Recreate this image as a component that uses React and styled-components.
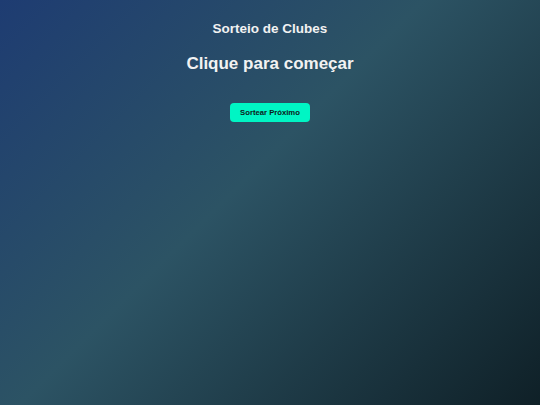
import React from 'react'
import styled, { createGlobalStyle } from 'styled-components'

const Global = createGlobalStyle`
  html, body, #root {
    margin: 0;
    height: 100%;
  }
  body {
    font-family: 'Liberation Sans', Arial, sans-serif;
    background: linear-gradient(135deg, #1e3c72 0%, #2c5364 45%, #0f2027 100%);
    color: #f2f2f2;
  }
`

const Page = styled.main`
  display: flex;
  flex-direction: column;
  align-items: center;
  padding-top: 21px;
  text-align: center;
`

const Title = styled.h1`
  margin: 0;
  font-size: 13.5px;
  font-weight: bold;
`

const Status = styled.h2`
  margin: 18px 0 0;
  font-size: 17px;
  font-weight: bold;
`

const DrawButton = styled.button`
  margin-top: 29px;
  padding: 0;
  height: 19px;
  width: 80px;
  border: none;
  border-radius: 4px;
  background: #00f5c4;
  color: #0d1a1a;
  font-family: 'Liberation Sans', Arial, sans-serif;
  font-size: 7.7px;
  font-weight: bold;
  white-space: nowrap;
  cursor: pointer;
`

const App = () => (
  <>
    <Global />
    <Page>
      <Title>Sorteio de Clubes</Title>
      <Status>Clique para começar</Status>
      <DrawButton>Sortear Próximo</DrawButton>
    </Page>
  </>
)

export default App
